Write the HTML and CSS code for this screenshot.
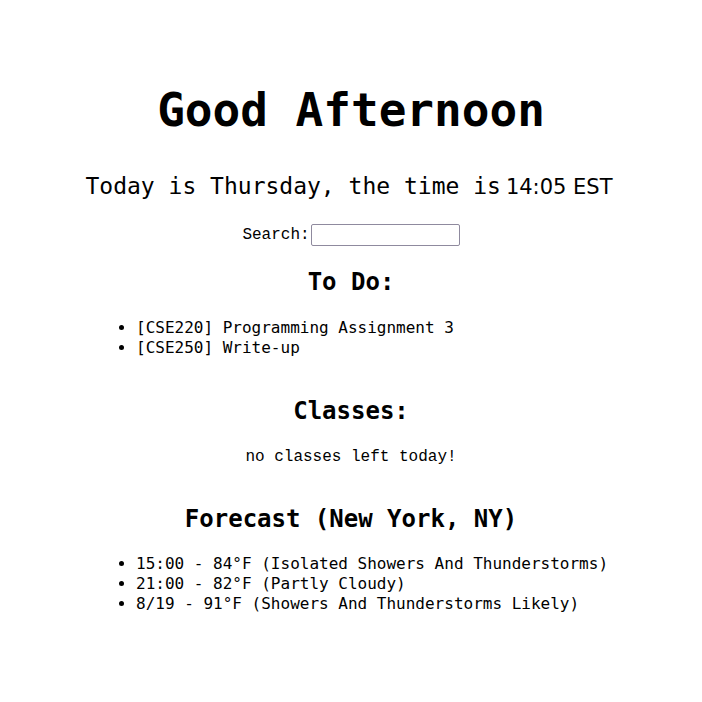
FILE: index.html
```html
<!DOCTYPE html>
<html>
<head>
<meta charset="utf-8">
<link rel="stylesheet" href="styles.css">
</head>
<body>
<div class="page">
  <h1 class="greeting">Good Afternoon</h1>
  <p class="today">Today is Thursday, the time is<span class="clock">14:05 EST</span></p>
  <div class="search"><label class="search-label" for="q">Search:</label><input id="q" class="search-input" type="text"></div>
  <h2 class="section-title">To Do:</h2>
  <ul class="list">
    <li>[CSE220] Programming Assignment 3</li>
    <li>[CSE250] Write-up</li>
  </ul>
  <h2 class="section-title classes-title">Classes:</h2>
  <p class="empty">no classes left today!</p>
  <h2 class="section-title forecast-title">Forecast (New York, NY)</h2>
  <ul class="list forecast-list">
    <li>15:00 - 84°F (Isolated Showers And Thunderstorms)</li>
    <li>21:00 - 82°F (Partly Cloudy)</li>
    <li>8/19 - 91°F (Showers And Thunderstorms Likely)</li>
  </ul>
</div>
</body>
</html>
```

FILE: styles.css
```css
html, body {
  margin: 0;
  padding: 0;
  background: #fff;
  color: #000;
}
body {
  font-family: "DejaVu Sans Mono", monospace;
  font-size: 16px;
}
.page {
  width: 510px;
  margin: 0 auto;
  padding-top: 84px;
  text-align: center;
}
.greeting {
  font-size: 46px;
  font-weight: bold;
  line-height: 52px;
  margin: 0;
}
.today {
  font-size: 23px;
  line-height: 30px;
  margin: 35px -30px 0 -34px;
  white-space: nowrap;
}
.clock {
  font-family: "DejaVu Sans", sans-serif;
  font-size: 21px;
  margin-left: 5px;
}
.search {
  margin-top: 22px;
  display: flex;
  justify-content: center;
  align-items: center;
}
.search-label {
  font-family: "Liberation Mono", monospace;
  font-size: 16px;
}
.search-input {
  width: 143px;
  height: 18px;
  padding: 1px 2px;
  border: 1px solid #8f8a9e;
  border-radius: 2px;
  margin: 0 0 0 1px;
}
.section-title {
  font-size: 24px;
  font-weight: bold;
  line-height: 30px;
  margin: 21px 0 0;
}
.list {
  text-align: left;
  margin: 21px 0 0;
  padding-left: 40px;
  line-height: 20px;
  white-space: nowrap;
}
.classes-title {
  margin-top: 38px;
}
.empty {
  font-family: "Liberation Mono", monospace;
  margin: 21px 0 0;
  line-height: 20px;
}
.forecast-title {
  margin-top: 37px;
}
.forecast-list {
  margin-top: 20px;
}
```
